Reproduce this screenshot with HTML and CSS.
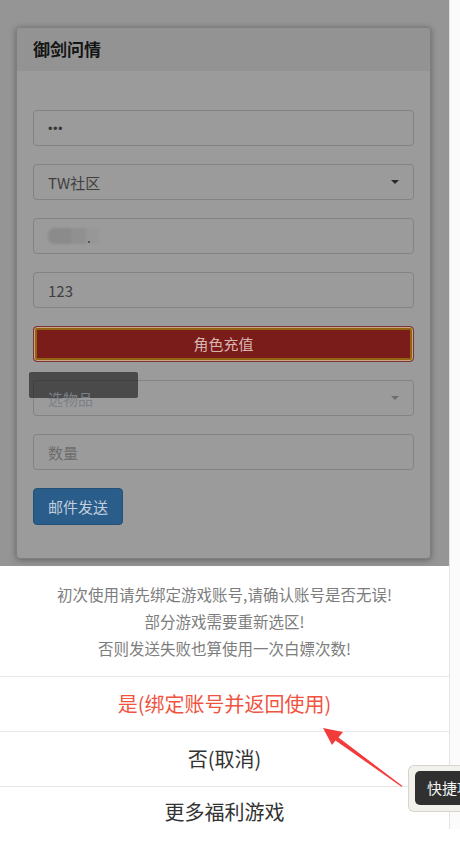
FILE: index.html
```html
<!DOCTYPE html>
<html lang="zh-CN">
<head>
<meta charset="utf-8">
<title>御剑问情</title>
<link rel="stylesheet" href="styles.css">
</head>
<body>
<div class="screen">
  <div class="page">
    <div class="backdrop">
      <div class="card">
        <div class="card-head">御剑问情</div>
        <div class="card-body">
          <div class="field"><span class="dots">•••</span></div>
          <div class="field select"><span class="val">TW社区</span><i class="caret"></i></div>
          <div class="field"><span class="blur"></span><span class="blur-dot"></span></div>
          <div class="field"><span class="val">123</span></div>
          <div class="btn-red">角色充值</div>
          <div class="field select"><span class="tip-box"></span><span class="ph ph-item">选物品</span><i class="caret light"></i></div>
          <div class="field"><span class="ph">数量</span></div>
          <div class="btn-row"><div class="btn-blue">邮件发送</div></div>
        </div>
      </div>
    </div>
    <div class="sheet">
      <div class="msg">
        <p>初次使用请先绑定游戏账号,请确认账号是否无误!</p>
        <p>部分游戏需要重新选区!</p>
        <p>否则发送失败也算使用一次白嫖次数!</p>
      </div>
      <div class="opt opt-red">是(绑定账号并返回使用)</div>
      <div class="opt">否(取消)</div>
      <div class="opt">更多福利游戏</div>
    </div>
  </div>
  <div class="rail"></div>
</div>
<svg class="arrow" width="95" height="75" viewBox="0 0 95 75">
  <path d="M8 8 L28 12 L23.5 17.5 L87.5 66 L86.5 66.8 L20.5 20.5 L17 25 Z" fill="#f23b3b"/>
</svg>
<div class="shortcut"><span class="shortcut-in">快捷项</span></div>
</body>
</html>
```

FILE: styles.css
```css
html, body {
  margin: 0;
  padding: 0;
}
body {
  width: 460px;
  height: 846px;
  overflow: hidden;
  position: relative;
  background: #ffffff;
  font-family: "Noto Sans CJK SC", "Liberation Sans", sans-serif;
}
.screen {
  display: flex;
  align-items: flex-start;
}
.page {
  width: 449px;
  flex: none;
}
.rail {
  width: 10px;
  height: 829px;
  border-left: 1px solid #e4e4e4;
  background: #fbfbfb;
  flex: none;
}
.backdrop {
  height: 566px;
  box-sizing: border-box;
  padding-top: 27px;
  background: #959595;
}
.card {
  margin-left: 16px;
  width: 415px;
  box-sizing: border-box;
  border: 1px solid #7f7f7f;
  border-radius: 4px;
  background: #9b9b9b;
  box-shadow: 0 1px 6px rgba(0, 0, 0, 0.35);
  overflow: hidden;
}
.card-head {
  height: 43px;
  background: #939393;
  padding-left: 16px;
  font-size: 17px;
  font-weight: 700;
  line-height: 42px;
  color: #151515;
}
.card-body {
  padding: 39px 16px 33px 16px;
  display: flex;
  flex-direction: column;
  gap: 18px;
}
.field {
  position: relative;
  height: 36px;
  box-sizing: border-box;
  border: 1px solid #838383;
  border-radius: 4px;
  display: flex;
  align-items: center;
  padding-left: 14px;
  font-size: 15px;
  color: #3f3f3f;
}
.dots {
  font-family: "Liberation Sans", sans-serif;
  font-size: 13px;
  letter-spacing: 0.5px;
  color: #3a3a3a;
}
.val {
  line-height: 1;
}
.ph {
  color: #6c6c6c;
}
.ph-item {
  position: relative;
  z-index: 1;
  color: #7c8188;
}
.caret {
  position: absolute;
  right: 14px;
  top: 15px;
  width: 0;
  height: 0;
  border-left: 4px solid transparent;
  border-right: 4px solid transparent;
  border-top: 4px solid #2a2a2a;
}
.caret.light {
  border-top-color: #6e6e6e;
}
.blur {
  display: block;
  width: 50px;
  height: 16px;
  border-radius: 7px 2px 2px 7px;
  background: linear-gradient(to right, #8b8b8b 0 46%, #909090 46% 76%, #979797 76% 100%);
  filter: blur(1px);
}
.blur-dot {
  position: absolute;
  left: 54px;
  top: 22px;
  width: 2px;
  height: 2px;
  background: #555;
}
.tip-box {
  position: absolute;
  left: -5px;
  top: -9px;
  width: 109px;
  height: 26px;
  border-radius: 2px;
  background: rgba(20, 20, 20, 0.6);
}
.btn-red {
  height: 36px;
  box-sizing: border-box;
  border: 1px solid #7e3434;
  border-radius: 4px;
  background: #7a1c1a;
  box-shadow: inset 0 0 0 1px #c8a48a, inset 0 0 0 3px #93640f;
  color: #d9b4b0;
  font-size: 15px;
  line-height: 34px;
  text-align: center;
}
.btn-row {
  display: flex;
}
.btn-blue {
  height: 37px;
  width: 90px;
  box-sizing: border-box;
  border-radius: 4px;
  border: 1px solid #244f76;
  background: #2a5d8a;
  color: #c2cfdc;
  font-size: 15px;
  line-height: 35px;
  text-align: center;
}
.sheet {
  background: #ffffff;
}
.msg {
  padding: 15px 0 14px;
  border-bottom: 1px solid #e8e8e8;
  text-align: center;
}
.msg p {
  margin: 0;
  font-size: 15.5px;
  line-height: 27px;
  color: #7d7d7d;
}
.opt {
  height: 54px;
  line-height: 54px;
  text-align: center;
  font-size: 20px;
  color: #333333;
  border-bottom: 1px solid #e8e8e8;
}
.opt:last-child {
  border-bottom: none;
  height: 42px;
  line-height: 50px;
  overflow: hidden;
}
.opt-red {
  color: #f0533f;
}
.arrow {
  position: absolute;
  left: 315px;
  top: 720px;
}
.shortcut {
  position: absolute;
  left: 408px;
  top: 765px;
  width: 52px;
  box-sizing: border-box;
  padding: 5px 0 6px 6px;
  border: 1px solid #d6d4cc;
  border-right: none;
  border-radius: 6px 0 0 6px;
  background: #f2f1ec;
  overflow: hidden;
}
.shortcut-in {
  display: block;
  height: 34px;
  padding-left: 12px;
  border-radius: 5px 0 0 5px;
  background: #303030;
  color: #f4f4f4;
  font-size: 15px;
  line-height: 34px;
  white-space: nowrap;
  overflow: hidden;
}
```
